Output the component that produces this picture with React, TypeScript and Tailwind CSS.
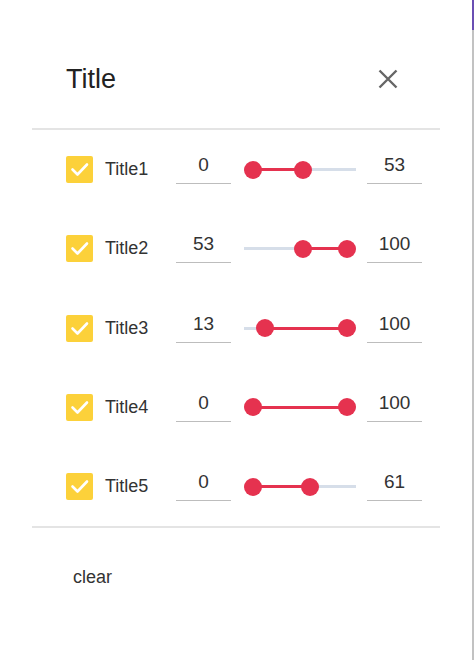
import { useState } from "react";

interface RangeRow {
  id: string;
  label: string;
  min: number;
  max: number;
  checked: boolean;
}

const initialRows: RangeRow[] = [
  { id: "t1", label: "Title1", min: 0, max: 53, checked: true },
  { id: "t2", label: "Title2", min: 53, max: 100, checked: true },
  { id: "t3", label: "Title3", min: 13, max: 100, checked: true },
  { id: "t4", label: "Title4", min: 0, max: 100, checked: true },
  { id: "t5", label: "Title5", min: 0, max: 61, checked: true },
];

// thumb travel inside the 112px track (thumb radius 9 on each side)
const TRAVEL = 94;

function CheckBox({ checked, onToggle }: { checked: boolean; onToggle: () => void }) {
  return (
    <button
      type="button"
      onClick={onToggle}
      className={`flex h-[27px] w-[27px] shrink-0 items-center justify-center rounded-[2px] ${
        checked ? "bg-[#fcd13a]" : "border-2 border-[#bdbdbd] bg-white"
      }`}
    >
      {checked && (
        <svg width="27" height="27" viewBox="0 0 27 27" fill="none">
          <path
            d="M6.5 13.5l5 5 9.5-10"
            stroke="#ffffff"
            strokeWidth="2.6"
            strokeLinecap="round"
            strokeLinejoin="round"
          />
        </svg>
      )}
    </button>
  );
}

function RangeSlider({ lo, hi }: { lo: number; hi: number }) {
  const loX = (lo / 100) * TRAVEL;
  const hiX = (hi / 100) * TRAVEL;
  return (
    <div className="relative ml-[13px] h-[18px] w-[112px] shrink-0">
      <div className="absolute inset-x-0 top-[7.5px] h-[3px] bg-[#d6dee9]" />
      <div
        className="absolute top-[7.5px] h-[3px] bg-[#e5324f]"
        style={{ left: 9 + loX, width: hiX - loX }}
      />
      <div
        className="absolute top-0 h-[18px] w-[18px] rounded-full bg-[#e5324f]"
        style={{ left: loX }}
      />
      <div
        className="absolute top-0 h-[18px] w-[18px] rounded-full bg-[#e5324f]"
        style={{ left: hiX }}
      />
    </div>
  );
}

function NumberBox({ value, className }: { value: number; className?: string }) {
  return (
    <input
      readOnly
      value={value}
      className={`h-[29px] w-[55px] shrink-0 border-b border-[#bdbdbd] bg-transparent pb-[8px] text-center text-[19px] text-[#333333] outline-none ${
        className ?? ""
      }`}
    />
  );
}

export default function App() {
  const [rows, setRows] = useState<RangeRow[]>(initialRows);

  const toggle = (id: string) =>
    setRows((prev) => prev.map((r) => (r.id === id ? { ...r, checked: !r.checked } : r)));

  return (
    <div className="flex h-[660px] w-full bg-white font-['Liberation_Sans',Arial,sans-serif]">
      <div className="flex flex-1 flex-col px-[32px]">
        {/* Header */}
        <div className="flex items-center justify-between pb-[32px] pl-[34px] pr-[42px] pt-[62px] leading-[34px]">
          <h2 className="text-[27px] font-normal text-[#222222]">Title</h2>
          <button type="button" className="flex h-[20px] w-[20px] items-center justify-center">
            <svg width="20" height="20" viewBox="0 0 20 20" fill="none">
              <path d="M1.5 1.5l17 17M18.5 1.5l-17 17" stroke="#666666" strokeWidth="2.4" />
            </svg>
          </button>
        </div>

        <div className="h-[2px] bg-[#e4e4e4]" />

        {/* Rows */}
        <div className="flex flex-col">
          {rows.map((row) => (
            <div key={row.id} className="flex h-[79.25px] items-center pl-[34px]">
              <CheckBox checked={row.checked} onToggle={() => toggle(row.id)} />
              <span className="ml-[12px] w-[71px] shrink-0 text-[18px] text-[#333333]">
                {row.label}
              </span>
              <NumberBox value={row.min} />
              <RangeSlider lo={row.min} hi={row.max} />
              <NumberBox value={row.max} className="ml-[11px]" />
            </div>
          ))}
        </div>

        <div className="h-[2px] bg-[#e4e4e4]" />

        <div className="mt-[37px] pl-[41px]">
          <button type="button" className="text-[18px] leading-[24px] text-[#333333]">
            clear
          </button>
        </div>
      </div>

      {/* window edge */}
      <div className="flex w-[2px] flex-col">
        <div className="h-[30px] bg-[#6a4fb3]" />
        <div className="flex-1 bg-[#c2c2c2]" />
      </div>
    </div>
  );
}
